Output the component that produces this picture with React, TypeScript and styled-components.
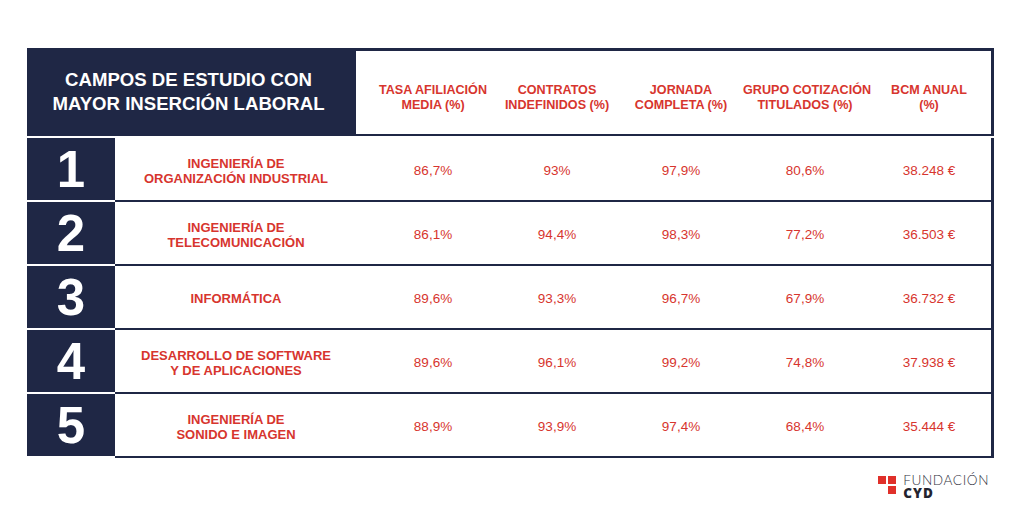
import React from "react";
import styled, { createGlobalStyle } from "styled-components";

const NAVY = "#1f2745";
const RED = "#d7352e";

const GlobalStyle = createGlobalStyle`
  html, body {
    margin: 0;
    padding: 0;
    background: #fff;
  }
  body {
    font-family: "Liberation Sans", Arial, sans-serif;
  }
`;

const Page = styled.div`
  width: 1024px;
  height: 522px;
  box-sizing: border-box;
  padding: 48px 0 0 27px;
  overflow: hidden;
`;

const Table = styled.div`
  width: 967px;
  display: flex;
  flex-direction: column;
`;

const HeaderRow = styled.div`
  display: flex;
  height: 88px;
  margin-bottom: 2px;
`;

const TitleCell = styled.div`
  width: 329px;
  background: ${NAVY};
  color: #fff;
  display: flex;
  align-items: center;
  justify-content: center;
  text-align: center;
  font-size: 18.6px;
  font-weight: 700;
  line-height: 24px;
  padding-right: 6px;
  box-sizing: border-box;
  white-space: nowrap;
`;

const HeaderCols = styled.div`
  flex: 1;
  display: grid;
  grid-template-columns: repeat(5, 124px);
  align-items: center;
  padding: 10px 0 0 15px;
  border: 3px solid ${NAVY};
  border-left: 0;
  border-bottom-width: 2px;
`;

const ColTitle = styled.div`
  color: ${RED};
  font-size: 12.6px;
  font-weight: 700;
  line-height: 15px;
  text-align: center;
  white-space: nowrap;
`;

const Row = styled.div`
  display: flex;
  height: 64px;
`;

const NumberCell = styled.div`
  width: 88px;
  height: 62px;
  background: ${NAVY};
  color: #fff;
  font-size: 51px;
  font-weight: 700;
  display: flex;
  align-items: center;
  justify-content: center;
`;

const RowBody = styled.div`
  flex: 1;
  display: grid;
  grid-template-columns: 256px repeat(5, 124px);
  align-items: center;
  border-right: 3px solid ${NAVY};
  border-bottom: 2px solid ${NAVY};
`;

const FieldName = styled.div`
  color: ${RED};
  font-size: 13px;
  font-weight: 700;
  line-height: 15px;
  text-align: center;
  padding: 3px 14px 0 0;
  white-space: nowrap;
`;

const Value = styled.div`
  color: ${RED};
  font-size: 13.5px;
  text-align: center;
  padding-top: 2px;
`;

const Footer = styled.div`
  width: 967px;
  display: flex;
  justify-content: flex-end;
  margin-top: 16px;
`;

const Logo = styled.div`
  display: flex;
  align-items: flex-start;
  gap: 7px;
  margin-right: 5px;
`;

const Squares = styled.div`
  display: grid;
  grid-template-columns: 8px 8px;
  grid-template-rows: 8px 8px;
  gap: 2px;
  margin-top: 2px;
`;

const Square = styled.span<{ $empty?: boolean }>`
  background: ${({ $empty }) => ($empty ? "transparent" : "#e0302a")};
`;

const LogoText = styled.div`
  display: flex;
  flex-direction: column;
`;

const LogoTop = styled.span`
  font-family: Lato, "Open Sans", sans-serif;
  font-weight: 300;
  font-size: 13.6px;
  line-height: 12px;
  height: 12px;
  letter-spacing: 0.6px;
  color: #33333f;
`;

const LogoBottom = styled.span`
  font-family: "Open Sans", Lato, sans-serif;
  font-weight: 800;
  font-size: 13.5px;
  line-height: 12px;
  height: 12px;
  margin-top: 1px;
  letter-spacing: 1px;
  color: #23232e;
`;

const columns = [
  ["TASA AFILIACIÓN", "MEDIA (%)"],
  ["CONTRATOS", "INDEFINIDOS (%)"],
  ["JORNADA", "COMPLETA (%)"],
  ["GRUPO COTIZACIÓN", "TITULADOS (%)"],
  ["BCM ANUAL", "(%)"],
];

const rows = [
  {
    name: ["INGENIERÍA DE", "ORGANIZACIÓN INDUSTRIAL"],
    values: ["86,7%", "93%", "97,9%", "80,6%", "38.248 €"],
  },
  {
    name: ["INGENIERÍA DE", "TELECOMUNICACIÓN"],
    values: ["86,1%", "94,4%", "98,3%", "77,2%", "36.503 €"],
  },
  {
    name: ["INFORMÁTICA"],
    values: ["89,6%", "93,3%", "96,7%", "67,9%", "36.732 €"],
  },
  {
    name: ["DESARROLLO DE SOFTWARE", "Y DE APLICACIONES"],
    values: ["89,6%", "96,1%", "99,2%", "74,8%", "37.938 €"],
  },
  {
    name: ["INGENIERÍA DE", "SONIDO E IMAGEN"],
    values: ["88,9%", "93,9%", "97,4%", "68,4%", "35.444 €"],
  },
];

const Lines = ({ lines }: { lines: string[] }) => (
  <>
    {lines.map((l, i) => (
      <React.Fragment key={i}>
        {i > 0 && <br />}
        {l}
      </React.Fragment>
    ))}
  </>
);

export default function App() {
  return (
    <Page>
      <GlobalStyle />
      <Table>
        <HeaderRow>
          <TitleCell>
            CAMPOS DE ESTUDIO CON
            <br />
            MAYOR INSERCIÓN LABORAL
          </TitleCell>
          <HeaderCols>
            {columns.map((c, i) => (
              <ColTitle key={i}>
                <Lines lines={c} />
              </ColTitle>
            ))}
          </HeaderCols>
        </HeaderRow>
        {rows.map((r, i) => (
          <Row key={i}>
            <NumberCell>{i + 1}</NumberCell>
            <RowBody>
              <FieldName>
                <Lines lines={r.name} />
              </FieldName>
              {r.values.map((v, j) => (
                <Value key={j}>{v}</Value>
              ))}
            </RowBody>
          </Row>
        ))}
      </Table>
      <Footer>
        <Logo>
          <Squares>
            <Square />
            <Square />
            <Square $empty />
            <Square />
          </Squares>
          <LogoText>
            <LogoTop>FUNDACIÓN</LogoTop>
            <LogoBottom>CYD</LogoBottom>
          </LogoText>
        </Logo>
      </Footer>
    </Page>
  );
}
